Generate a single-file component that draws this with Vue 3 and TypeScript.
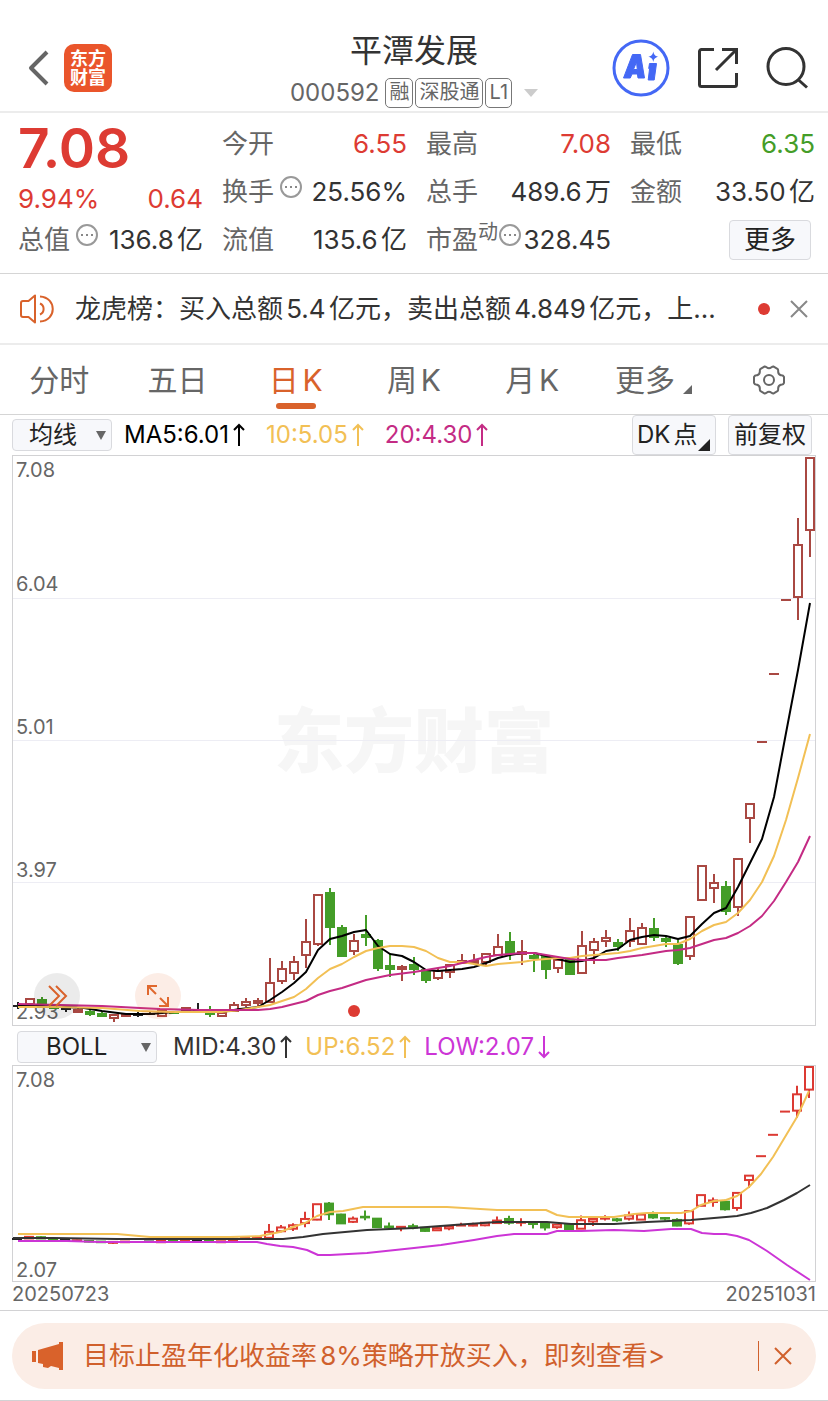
<script setup lang="ts">
import { computed, ref } from 'vue'

type Kind = 'up' | 'down' | 'flat' | 'limit'
interface Candle { kind: Kind; high: number; top: number; bottom: number; low: number }
interface Quote { label: string; value: string; tone?: string; info?: boolean; mark?: string }

const quotes: Quote[] = [
  { label: '今开', value: '6.55', tone: 'rise' },
  { label: '最高', value: '7.08', tone: 'rise' },
  { label: '最低', value: '6.35', tone: 'fall' },
  { label: '换手', value: '25.56%', info: true },
  { label: '总手', value: '489.6万' },
  { label: '金额', value: '33.50亿' },
  { label: '流值', value: '135.6亿' },
  { label: '市盈', value: '328.45', mark: '动', info: true },
]

const tabs = ['分时', '五日', '日K', '周K', '月K']
const activeTab = ref('日K')
const noticeOpen = ref(true)
const bannerOpen = ref(true)
const average = ref('均线')
const indicator = ref('BOLL')

const averages = [
  { text: 'MA5:6.01', tone: 'black' },
  { text: '10:5.05', tone: 'gold' },
  { text: '20:4.30', tone: 'pink' },
]
const bands = [
  { text: 'MID:4.30', tone: 'ink', down: false },
  { text: 'UP:6.52', tone: 'gold', down: false },
  { text: 'LOW:2.07', tone: 'violet', down: true },
]

const gridLines = [598, 740, 882]
const axisLabels = [
  { text: '7.08', y: 477 },
  { text: '6.04', y: 591 },
  { text: '5.01', y: 734 },
  { text: '3.97', y: 877 },
  { text: '2.93', y: 1019 },
]

const kinds: Record<string, Kind> = { u: 'up', d: 'down', k: 'flat', r: 'limit' }

// kind, high, body top, body bottom, low
const sessions = `
k 1002 1006 1006 1009;u 998 999 1004 1005;d 997 1000 1004 1005;d 1004 1005 1008 1008;k 1008 1009 1009 1012
u 1008 1010 1012 1013;d 1009 1012 1014 1016;d 1012 1014 1016 1016;u 1014 1015 1018 1022;u 1013 1014 1016 1016
k 1012 1015 1015 1017;k 1012 1014 1014 1015;u 1009 1010 1016 1016;d 1011 1012 1013 1014;u 1007 1008 1011 1012
k 1003 1010 1010 1012;d 1006 1010 1014 1017;u 1012 1013 1016 1016;u 1002 1005 1011 1012;u 998 1002 1005 1007
u 998 1001 1003 1006;u 958 983 1002 1002;u 961 969 981 984;u 956 962 973 980;u 919 942 955 968
u 894 895 944 946;d 888 893 927 945;d 925 928 956 957;u 934 941 951 955;d 915 935 937 946
d 939 941 968 971;d 953 966 969 977;u 965 967 969 981;d 957 965 969 975;d 970 970 980 983
u 968 971 978 980;u 965 965 972 978;u 954 961 963 963;u 954 961 963 965;u 954 954 962 965
u 934 947 955 956;d 932 942 954 960;u 940 952 954 965;d 952 956 958 972;d 956 956 969 979
u 959 960 968 973;d 960 960 974 974;u 931 946 973 973;u 938 942 950 964;u 930 938 941 947
d 939 943 946 951;u 918 931 941 947;u 923 928 944 944;d 918 929 937 941;d 936 939 941 947
d 940 945 963 965;u 916 917 956 960;u 866 866 900 901;u 874 883 888 903;d 881 887 911 915
u 859 859 907 916;u 803 804 818 843;r 742 742 742 742;r 674 674 674 674;r 600 600 600 600
u 518 545 597 620;u 458 458 530 557`

const candles: Candle[] = sessions.trim().split(/[;\n]/).map((row) => {
  const [code, high, top, bottom, low] = row.trim().split(' ')
  return { kind: kinds[code], high: +high, top: +top, bottom: +bottom, low: +low }
})

// The lower panel spans 2.07 to 7.08, so the same prices sit closer together.
const toLower = (y: number) => 1067 + (y - 458) * 0.314
const lowerCandles = computed<Candle[]>(() => candles.map((c) => ({
  kind: c.kind,
  high: toLower(c.high),
  top: toLower(c.top),
  bottom: toLower(c.bottom),
  low: toLower(c.low),
})))
const centre = (index: number) => 18 + index * 12

const upperLines = [
  { tone: 'black', points: '18,1005 42,1006 66,1007 84,1008 102,1011 126,1014 150,1014 174,1012 198,1011 222,1012 240,1009 258,1007 270,1000 282,992 294,983 306,972 318,950 330,939 342,936 354,932 366,930 378,946 390,954 402,956 414,962 426,970 438,971 450,970 462,969 474,967 486,963 498,958 510,955 522,953 534,953 546,956 558,959 570,962 582,961 594,958 606,951 618,949 630,940 642,937 654,935 666,936 678,939 690,936 702,924 714,913 726,908 738,887 750,863 762,839 774,797 786,733 798,670 810,603' },
  { tone: 'gold', points: '18,1007 60,1007 102,1008 140,1011 170,1012 200,1012 222,1012 240,1010 258,1007 270,1005 282,1001 294,997 306,989 318,978 330,969 342,964 354,957 366,951 378,948 390,946 402,946 414,947 426,951 438,958 450,962 462,962 474,964 486,966 498,964 510,963 522,962 534,960 546,959 558,958 570,958 582,956 594,955 606,954 618,953 630,951 642,948 654,946 666,944 678,944 690,939 702,931 714,925 726,922 738,913 750,900 762,882 774,856 786,820 798,778 810,734' },
  { tone: 'pink', points: '18,1004 60,1005 102,1006 140,1008 160,1009 200,1010 240,1010 258,1010 270,1009 282,1007 294,1004 306,1001 318,995 330,991 342,988 354,984 366,980 390,975 414,972 426,970 438,968 450,966 462,963 474,960 486,957 498,955 510,954 522,953 534,953 546,955 558,957 570,959 582,960 594,960 606,960 618,958 642,955 666,951 678,950 690,948 702,944 714,940 726,938 738,933 750,926 762,916 774,901 786,882 798,862 810,836' },
]
const lowerLines = [
  { tone: 'violet', points: '18,1241 67,1241 100,1242 257,1242 267,1244 280,1246 293,1247 307,1250 318,1255 330,1255 367,1253 414,1248 441,1245 474,1240 497,1236 514,1234 531,1234 547,1234 557,1231 581,1231 614,1230 644,1231 671,1229 691,1229 702,1233 714,1234 726,1234 737,1236 749,1240 767,1251 787,1265 810,1280' },
  { tone: 'gold', points: '18,1234 117,1234 150,1237 230,1237 260,1236 280,1232 293,1227 305,1223 317,1216 330,1212 343,1211 363,1207 414,1207 447,1207 497,1210 546,1210 557,1215 569,1217 614,1217 634,1214 647,1213 681,1213 691,1211 701,1205 714,1201 726,1200 737,1196 749,1187 761,1174 773,1157 785,1137 797,1117 809,1091' },
  { tone: 'ink', points: '13,1238 53,1238 117,1239 200,1239 263,1239 283,1239 303,1237 323,1234 367,1230 414,1228 454,1225 497,1222 527,1222 547,1222 571,1224 614,1224 647,1222 691,1220 714,1218 726,1217 737,1216 751,1213 767,1208 784,1200 797,1193 810,1185' },
]
</script>

<template>
  <main class="page">
    <header class="header">
      <div class="header-side">
        <button class="plain" type="button" aria-label="返回">
          <svg width="21" height="36" viewBox="0 0 21 36" fill="none" stroke="#666" stroke-width="4"><path d="M19 2 3 18l16 16" stroke-linejoin="round" /></svg>
        </button>
        <a class="logo" href="#home"><span>东方</span><span>财富</span></a>
      </div>
      <div class="heading">
        <h1>平潭发展</h1>
        <div class="code-row">
          <span class="code">000592</span>
          <span class="tag">融</span><span class="tag">深股通</span><span class="tag">L1</span>
          <button class="plain code-more" type="button" aria-label="切换股票">
            <svg width="14" height="8" viewBox="0 0 14 8"><path d="M0 0h14L7 8z" fill="#ccc" /></svg>
          </button>
        </div>
      </div>
      <div class="header-side tools">
        <button class="plain" type="button" aria-label="Ai">
          <svg width="58" height="58" viewBox="0 0 58 58">
            <circle cx="29" cy="29" r="27" fill="none" stroke="#4468f5" stroke-width="3" />
            <g fill="#4468f5" stroke="#4468f5" stroke-linejoin="round">
              <path fill-rule="evenodd" d="M20.500 15.500h8l4 23.500h-6.500l-.6-4h-5.400l-1.700 4h-6.800zM24.500 23l-3 7.500h3.800z" />
              <path d="M37.500 24.500h7l-2.300 16.500h-6l1.400-11.500h-.9z" />
              <path stroke="none" d="M41.300 12.500c.8 3.500 1.700 4.400 5 5.200-3.300.9-4.200 1.800-5 5.200-.8-3.400-1.700-4.300-5-5.200 3.300-.8 4.200-1.700 5-5.200z" />
            </g>
          </svg>
        </button>
        <button class="plain" type="button" aria-label="分享">
          <svg width="42" height="42" viewBox="0 0 42 42" fill="none" stroke="#333" stroke-width="3"><path d="M17 2.500H4.500a2 2 0 0 0-2 2v33a2 2 0 0 0 2 2h33a2 2 0 0 0 2-2V26M25 2.500h14.500V17M38.500 3.500 19 23" /></svg>
        </button>
        <button class="plain" type="button" aria-label="搜索">
          <svg width="42" height="42" viewBox="0 0 42 42" fill="none" stroke="#333" stroke-width="3"><circle cx="20" cy="19.500" r="18" /><path d="m32 32.500 9 8" /></svg>
        </button>
      </div>
    </header>

    <section class="quote" aria-label="行情">
      <div class="quote-main">
        <strong class="price">7.08</strong>
        <div class="change"><span>9.94%</span><span>0.64</span></div>
        <div class="cell">
          <span class="label">总值</span>
          <button class="plain info" type="button" aria-label="总值说明">
            <svg width="22" height="22" viewBox="0 0 22 22"><circle cx="11" cy="11" r="10" fill="none" stroke="#999" stroke-width="2" /><path d="M5 10h2v2H5zm5 0h2v2h-2zm5 0h2v2h-2z" fill="#888" /></svg>
          </button>
          <span class="value">136.8亿</span>
        </div>
      </div>
      <div class="quote-grid">
        <div v-for="q in quotes" :key="q.label" class="cell">
          <span class="label">{{ q.label }}</span>
          <span v-if="q.mark" class="mark">{{ q.mark }}</span>
          <button v-if="q.info" class="plain info" :class="{ tight: q.mark }" type="button" :aria-label="q.label + '说明'">
            <svg width="22" height="22" viewBox="0 0 22 22"><circle cx="11" cy="11" r="10" fill="none" stroke="#999" stroke-width="2" /><path d="M5 10h2v2H5zm5 0h2v2h-2zm5 0h2v2h-2z" fill="#888" /></svg>
          </button>
          <span class="value" :class="q.tone">{{ q.value }}</span>
        </div>
        <div class="cell cell-end"><button class="boxed more" type="button">更多</button></div>
      </div>
    </section>

    <section v-if="noticeOpen" class="notice">
      <svg width="34" height="30" viewBox="0 0 34 30" fill="none" stroke="#d9622b" stroke-width="2"><path d="M15 1.500v27L8.500 23H3a2 2 0 0 1-2-2V9a2 2 0 0 1 2-2h5.500z" stroke-linejoin="round" /><path d="M20 9.500a6 6 0 0 1 0 11M20 2.500c17 1 17 24 0 25" /></svg>
      <p>龙虎榜：买入总额5.4亿元，卖出总额4.849亿元，上...</p>
      <i class="dot"></i>
      <button class="plain" type="button" aria-label="关闭公告" @click="noticeOpen = false">
        <svg width="18" height="18" viewBox="0 0 18 18" stroke="#888" stroke-width="2"><path d="m1 1 16 16M17 1 1 17" /></svg>
      </button>
    </section>

    <nav class="tabs">
      <button v-for="tab in tabs" :key="tab" type="button" class="tab" :class="{ active: activeTab === tab }" @click="activeTab = tab">{{ tab }}</button>
      <button type="button" class="tab tab-more">更多<svg class="corner" width="9" height="9" viewBox="0 0 9 9"><path d="M9 0v9H0z" fill="#666" /></svg></button>
      <button type="button" class="tab" aria-label="设置">
        <svg width="34" height="32" viewBox="0 0 34 32" fill="none" stroke="#666" stroke-width="2"><path d="M12.300 2.600a3 3 0 0 1 2.200.6 4 4 0 0 0 5 0 3 3 0 0 1 2.200-.6l3.700 2.200a3 3 0 0 1 .8 2.200 4 4 0 0 0 2.600 4.200 3 3 0 0 1 3.200 1.800v5.800a3 3 0 0 1-3.200 2 4 4 0 0 0-2.600 4.200 3 3 0 0 1-.8 2.200l-3.700 2.200a3 3 0 0 1-2.200-.6 4 4 0 0 0-5 0 3 3 0 0 1-2.200.6l-3.700-2.200a3 3 0 0 1-.8-2.200 4 4 0 0 0-2.600-4.200A3 3 0 0 1 2 18.800V13a3 3 0 0 1 3.200-1.800A4 4 0 0 0 7.800 7a3 3 0 0 1 .8-2.200z" stroke-linejoin="round" /><circle cx="17" cy="16" r="5" /></svg>
      </button>
    </nav>

    <div class="toolbar">
      <label class="picker boxed">
        <select v-model="average" aria-label="主图指标"><option>均线</option></select>
        <svg width="10" height="9" viewBox="0 0 10 9"><path d="M0 0h10L5 9z" fill="#666" /></svg>
      </label>
      <span v-for="a in averages" :key="a.text" class="legend" :class="a.tone">{{ a.text }}<svg width="12" height="24" viewBox="0 0 12 24"><path d="M6 23V2M1 7l5-5 5 5" /></svg></span>
      <div class="toolbar-end">
        <button class="boxed tall dk" type="button">DK点<svg width="12" height="12" viewBox="0 0 12 12"><path d="M12 0v12H0z" fill="#222" /></svg></button>
        <button class="boxed tall" type="button">前复权</button>
      </div>
    </div>

    <div class="chart">
      <svg class="plot" viewBox="13 456 802 569" role="img" aria-label="日K线图">
        <text x="414" y="767" class="watermark">东方财富</text>
        <path v-for="y in gridLines" :key="y" :d="`M13 ${y}H815v1H13z`" fill="#ededf4" />
        <text v-for="l in axisLabels" :key="l.text" x="16" :y="l.y" class="axis">{{ l.text }}</text>
        <g v-for="(c, i) in candles" :key="i" :class="['candle', c.kind]">
          <path v-if="c.kind === 'flat' || c.kind === 'limit'" :d="`M${centre(i) - 5} ${c.top}h10M${centre(i)} ${c.high}V${c.low}`" />
          <template v-else>
            <path :d="`M${centre(i)} ${c.high}V${c.top}M${centre(i)} ${c.bottom}V${c.low}`" />
            <rect :x="centre(i) - 4" :y="c.top" width="8" :height="c.bottom - c.top" />
          </template>
        </g>
        <polyline v-for="l in upperLines" :key="l.tone" class="line" :class="l.tone" :points="l.points" />
        <circle cx="354" cy="1011" r="6" fill="#dd3b33" />
      </svg>
      <button class="float float-next" type="button" aria-label="前进">
        <svg width="22" height="24" viewBox="0 0 22 24" fill="none" stroke="#d9622b" stroke-width="2"><path d="m3 2 10 10L3 22M10 2l10 10-10 10" /></svg>
      </button>
      <button class="float float-full" type="button" aria-label="全屏">
        <svg width="24" height="24" viewBox="0 0 24 24" fill="none" stroke="#e0682e" stroke-width="2"><path d="M2 11V2h9M2 2l8 8M22 13v9h-9M22 22l-8-8" /></svg>
      </button>
    </div>

    <div class="toolbar toolbar-low">
      <label class="picker boxed wide">
        <select v-model="indicator" aria-label="副图指标"><option>BOLL</option></select>
        <svg width="10" height="9" viewBox="0 0 10 9"><path d="M0 0h10L5 9z" fill="#666" /></svg>
      </label>
      <span v-for="b in bands" :key="b.text" class="legend" :class="b.tone">{{ b.text }}<svg width="12" height="24" viewBox="0 0 12 24"><path :d="b.down ? 'M6 1v21M1 17l5 5 5-5' : 'M6 23V2M1 7l5-5 5 5'" /></svg></span>
    </div>

    <div class="chart">
      <svg class="plot lower" viewBox="13 1066 802 215" role="img" aria-label="BOLL 指标图">
        <text x="16" y="1087" class="axis">7.08</text>
        <text x="16" y="1277" class="axis">2.07</text>
        <g v-for="(c, i) in lowerCandles" :key="i" :class="['candle', c.kind]">
          <path v-if="c.kind === 'flat' || c.kind === 'limit'" :d="`M${centre(i) - 6} ${c.top}h10M${centre(i) - 1} ${c.high}V${c.low}`" />
          <template v-else>
            <path :d="`M${centre(i) - 1} ${c.high}V${c.top}M${centre(i) - 1} ${c.bottom}V${c.low}`" />
            <rect :x="centre(i) - 5" :y="c.top" width="8" :height="c.bottom - c.top" />
          </template>
        </g>
        <polyline v-for="l in lowerLines" :key="l.tone" class="line" :class="l.tone" :points="l.points" />
      </svg>
    </div>
    <div class="dates"><time datetime="2025-07-23">20250723</time><time datetime="2025-10-31">20251031</time></div>

    <footer class="footer">
      <div v-if="bannerOpen" class="banner">
        <svg width="32" height="28" viewBox="0 0 32 28" fill="#d9622b"><path d="M0 9h4v11H0zM6 8l21-6V0h4v28h-4v-2l-8-2-3 2-5-1v-3l-5-1z" /></svg>
        <a href="#strategy">目标止盈年化收益率8%策略开放买入，即刻查看&gt;</a>
        <button class="plain" type="button" aria-label="关闭推广" @click="bannerOpen = false">
          <svg width="18" height="18" viewBox="0 0 18 18" stroke="#d0602c" stroke-width="2"><path d="m1 1 16 16M17 1 1 17" /></svg>
        </button>
      </div>
    </footer>
  </main>
</template>

<style>
body {
  margin: 0;
  background: #fff;
}
</style>

<style scoped>
.page {
  font-family: Inter, "Noto Sans CJK SC", sans-serif;
  font-size: 26px;
  line-height: 32px;
  color: #333;
  text-autospace: normal;
}
.page * {
  box-sizing: border-box;
}
button,
select {
  font: inherit;
  color: inherit;
  text-autospace: normal;
}
button {
  cursor: pointer;
}
.plain {
  display: flex;
  padding: 0;
  border: 0;
  background: none;
}
svg {
  flex: none;
}
.boxed {
  border: 1px solid #d9dade;
  border-radius: 4px;
  background: #f7f8fb;
  color: #222;
}

.header {
  display: grid;
  grid-template-columns: 1fr auto 1fr;
  align-items: center;
  padding: 24px 20px 0;
  border-bottom: 2px solid #ececec;
}
.header-side {
  display: flex;
  align-items: center;
  gap: 15px;
  padding-left: 8px;
}
.tools {
  justify-content: flex-end;
  gap: 27px;
}
.logo {
  display: flex;
  flex-direction: column;
  align-items: center;
  justify-content: center;
  width: 48px;
  height: 48px;
  border-radius: 10px;
  background: #ea552b;
  color: #fff;
  font-size: 18px;
  font-weight: 700;
  line-height: 19px;
  text-decoration: none;
}
.heading {
  text-align: center;
}
h1 {
  margin: 0;
  font-size: 32px;
  font-weight: 400;
  line-height: 53px;
}
.code-row {
  display: flex;
  align-items: center;
  justify-content: center;
  gap: 2px;
  height: 34px;
  padding-bottom: 2px;
  color: #666;
}
.code {
  margin-right: 4px;
  font-size: 24px;
}
.tag {
  height: 30px;
  padding: 0 3px;
  border: 1px solid #777;
  border-radius: 5px;
  font-size: 20px;
  line-height: 27px;
}
.code-more {
  margin-left: 10px;
}

.quote {
  display: grid;
  grid-template-columns: calc((100% - 57px) / 4) 1fr;
  gap: 19px;
  padding: 7px 13px 9px 18px;
  border-bottom: 1px solid #d5d5d5;
}
.quote-grid {
  display: grid;
  grid-template-columns: repeat(3, 1fr);
  grid-auto-rows: 48px;
  column-gap: 19px;
}
.quote-main {
  display: flex;
  flex-direction: column;
  color: #dd3b33;
}
.price {
  height: 58px;
  font-size: 55px;
  font-weight: 600;
  line-height: 56px;
}
.change {
  display: flex;
  justify-content: space-between;
  height: 38px;
  line-height: 42px;
}
.cell {
  display: flex;
  align-items: center;
  height: 48px;
  white-space: nowrap;
}
.cell-end {
  justify-content: flex-end;
  padding-right: 4px;
}
.label,
.mark {
  color: #666;
}
.mark {
  align-self: flex-start;
  font-size: 20px;
}
.info {
  align-self: flex-start;
  margin: 8px 0 0 6px;
}
.info.tight {
  margin-left: 1px;
}
.value {
  margin-left: auto;
  color: #333;
}
.value.rise {
  color: #dd3b33;
}
.value.fall {
  color: #449d28;
}
.more {
  width: 82px;
  height: 40px;
  padding: 0;
}

.notice {
  display: flex;
  align-items: center;
  height: 71px;
  padding: 0 20px;
  border-bottom: 2px solid #ececec;
}
.notice p {
  flex: 1;
  min-width: 0;
  margin: 0 12px 0 21px;
  overflow: hidden;
  white-space: nowrap;
}
.dot {
  width: 12px;
  height: 12px;
  margin-right: 20px;
  border-radius: 50%;
  background: #dd3b33;
}

.tabs {
  display: grid;
  grid-template-columns: repeat(7, 1fr);
  height: 70px;
  border-bottom: 1px solid #d5d5d5;
}
.tab {
  position: relative;
  display: flex;
  align-items: center;
  justify-content: center;
  padding: 0;
  border: 0;
  background: none;
  color: #666;
  font-size: 30px;
}
.tab-more {
  padding-left: 6px;
}
.tab.active {
  color: #d9622b;
}
.tab.active::after {
  content: "";
  position: absolute;
  bottom: 5px;
  width: 40px;
  height: 6px;
  border-radius: 3px;
  background: #d9622b;
}
.corner {
  margin: 20px 0 0 8px;
}

.toolbar {
  display: flex;
  align-items: center;
  gap: 21px;
  height: 40px;
  padding: 0 16px 0 12px;
  font-size: 24px;
  white-space: nowrap;
}
.toolbar-low {
  height: 39px;
  gap: 13px;
  padding: 3px 16px 0 17px;
}
.picker {
  position: relative;
  display: flex;
  align-items: center;
  width: 100px;
  height: 32px;
  margin-right: -9px;
}
.picker.wide {
  width: 140px;
  margin-right: 3px;
}
.picker select {
  width: 100%;
  height: 30px;
  padding: 0 0 0 16px;
  border: 0;
  background: none;
  appearance: none;
  line-height: 30px;
}
.picker.wide select {
  padding-left: 28px;
}
.picker svg {
  position: absolute;
  right: 5px;
  pointer-events: none;
}
.legend {
  display: flex;
  align-items: center;
  gap: 4px;
}
.legend svg {
  fill: none;
  stroke: currentColor;
  stroke-width: 2;
}
.toolbar-end {
  display: flex;
  gap: 12px;
  margin-left: auto;
}
.tall {
  width: 84px;
  height: 40px;
  padding: 0;
}
.dk {
  display: flex;
  align-items: center;
  padding-left: 4px;
}
.dk svg {
  margin: 20px 0 0 1px;
}
.black {
  color: #000;
  stroke: #000;
}
.ink {
  color: #333;
  stroke: #333;
}
.gold {
  color: #f2c055;
  stroke: #f2c055;
}
.pink {
  color: #c42b84;
  stroke: #c42b84;
}
.violet {
  color: #cc35d6;
  stroke: #cc35d6;
}
.legend {
  stroke: none;
}

.chart {
  position: relative;
  margin: 0 12px;
  border: 1px solid #d2d2d4;
}
.plot {
  display: block;
  width: 100%;
  height: auto;
  overflow: visible;
}
.axis {
  fill: #666;
  font-size: 20px;
}
.watermark {
  fill: #f6f6f6;
  font-size: 70px;
  font-weight: 900;
  text-anchor: middle;
}
.line {
  fill: none;
  stroke-width: 2;
  stroke-linejoin: round;
}
.candle {
  stroke-width: 2;
  fill: #fff;
  stroke: #a94842;
}
.lower .candle {
  stroke: #dc3a33;
}
.candle.down,
.lower .candle.down {
  fill: #449d28;
  stroke: #449d28;
}
.candle.flat,
.lower .candle.flat {
  stroke: #222;
}
.float {
  position: absolute;
  bottom: 6px;
  display: flex;
  align-items: center;
  justify-content: center;
  width: 46px;
  height: 46px;
  padding: 0;
  border: 0;
  border-radius: 50%;
}
.float-next {
  left: 21px;
  background: rgba(0, 0, 0, 0.08);
}
.float-full {
  left: 122px;
  background: rgba(230, 110, 50, 0.12);
}
.dates {
  display: flex;
  justify-content: space-between;
  height: 28px;
  padding: 0 12px;
  color: #666;
  font-size: 20px;
  line-height: 25px;
}

.footer {
  padding: 12px 12px 11px;
  border-top: 1px solid #d2d2d4;
  border-bottom: 1px solid #d2d2d4;
}
.banner {
  display: flex;
  align-items: center;
  height: 66px;
  padding: 0 24px 0 20px;
  border-radius: 33px;
  background: #fbede6;
}
.banner a {
  flex: 1;
  margin-left: 19px;
  color: #d0602c;
  text-decoration: none;
  white-space: nowrap;
}
.banner button {
  padding: 6px 0 6px 15px;
  border-left: 1px solid #d0602c;
}
</style>
